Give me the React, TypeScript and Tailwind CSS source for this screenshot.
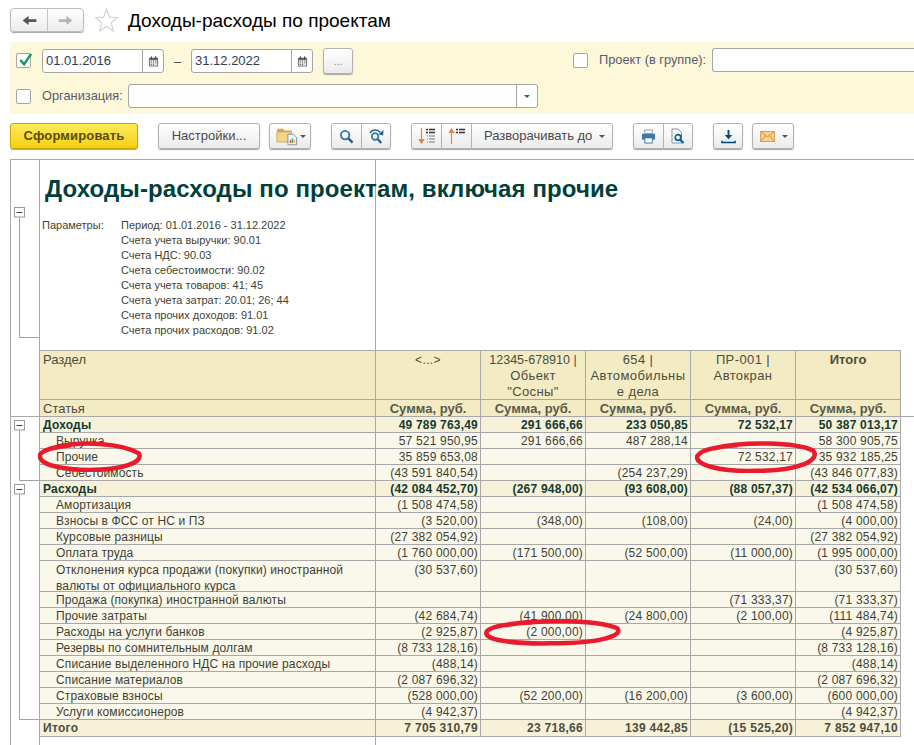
import type { ReactNode } from "react";

const btn =
  "flex items-center justify-center h-[26px] rounded-[3px] border border-[#b2b2b2] bg-linear-to-b from-white to-[#ebebeb] shadow-[0_1px_1px_#a3a3a3] text-[13px] text-[#4a4a4a]";

type Row = { name: string; vals: string[]; kind: "group" | "item" | "total"; tall?: boolean };

const rows: Row[] = [
  { name: "Доходы", kind: "group", vals: ["49 789 763,49", "291 666,66", "233 050,85", "72 532,17", "50 387 013,17"] },
  { name: "Выручка", kind: "item", vals: ["57 521 950,95", "291 666,66", "487 288,14", "", "58 300 905,75"] },
  { name: "Прочие", kind: "item", vals: ["35 859 653,08", "", "", "72 532,17", "35 932 185,25"] },
  { name: "Себестоимость", kind: "item", vals: ["(43 591 840,54)", "", "(254 237,29)", "", "(43 846 077,83)"] },
  { name: "Расходы", kind: "group", vals: ["(42 084 452,70)", "(267 948,00)", "(93 608,00)", "(88 057,37)", "(42 534 066,07)"] },
  { name: "Амортизация", kind: "item", vals: ["(1 508 474,58)", "", "", "", "(1 508 474,58)"] },
  { name: "Взносы в ФСС от НС и ПЗ", kind: "item", vals: ["(3 520,00)", "(348,00)", "(108,00)", "(24,00)", "(4 000,00)"] },
  { name: "Курсовые разницы", kind: "item", vals: ["(27 382 054,92)", "", "", "", "(27 382 054,92)"] },
  { name: "Оплата труда", kind: "item", vals: ["(1 760 000,00)", "(171 500,00)", "(52 500,00)", "(11 000,00)", "(1 995 000,00)"] },
  { name: "Отклонения курса продажи (покупки) иностранной валюты от официального курса", kind: "item", tall: true, vals: ["(30 537,60)", "", "", "", "(30 537,60)"] },
  { name: "Продажа (покупка) иностранной валюты", kind: "item", vals: ["", "", "", "(71 333,37)", "(71 333,37)"] },
  { name: "Прочие затраты", kind: "item", vals: ["(42 684,74)", "(41 900,00)", "(24 800,00)", "(2 100,00)", "(111 484,74)"] },
  { name: "Расходы на услуги банков", kind: "item", vals: ["(2 925,87)", "(2 000,00)", "", "", "(4 925,87)"] },
  { name: "Резервы по сомнительным долгам", kind: "item", vals: ["(8 733 128,16)", "", "", "", "(8 733 128,16)"] },
  { name: "Списание выделенного НДС на прочие расходы", kind: "item", vals: ["(488,14)", "", "", "", "(488,14)"] },
  { name: "Списание материалов", kind: "item", vals: ["(2 087 696,32)", "", "", "", "(2 087 696,32)"] },
  { name: "Страховые взносы", kind: "item", vals: ["(528 000,00)", "(52 200,00)", "(16 200,00)", "(3 600,00)", "(600 000,00)"] },
  { name: "Услуги комиссионеров", kind: "item", vals: ["(4 942,37)", "", "", "", "(4 942,37)"] },
];

const params = [
  "Период: 01.01.2016 - 31.12.2022",
  "Счета учета выручки: 90.01",
  "Счета НДС: 90.03",
  "Счета себестоимости: 90.02",
  "Счета учета товаров: 41; 45",
  "Счета учета затрат: 20.01; 26; 44",
  "Счета прочих доходов: 91.01",
  "Счета прочих расходов: 91.02",
];

const gridCols = "grid grid-cols-[28px_337px_105px_105px_105px_105px_105px_14px]";

function Caret() {
  return <span className="w-0 h-0 border-x-[3px] border-x-transparent border-t-[3px] border-t-[#555]" />;
}

function CheckBox({ checked }: { checked?: boolean }) {
  return (
    <span className="relative block w-[15px] h-[15px] rounded-[2px] border border-[#a5a5a5] bg-white">
      {checked && (
        <svg viewBox="0 0 16 16" className="absolute left-[1px] -top-[2px] w-[15px] h-[15px]">
          <path d="M2.5 8.5 6.5 13 14 2" fill="none" stroke="#0f9d58" strokeWidth="2.6" />
        </svg>
      )}
    </span>
  );
}

function CalendarIcon() {
  return (
    <svg viewBox="0 0 12 12" className="w-[11px] h-[11px]">
      <rect x="1" y="2" width="10" height="9.5" fill="#666" rx="1" />
      <rect x="3" y="0.5" width="1.4" height="2.5" fill="#444" />
      <rect x="7.6" y="0.5" width="1.4" height="2.5" fill="#444" />
      <rect x="2" y="4.5" width="8" height="6" fill="#eee" />
      <path d="M3 5.5h1.2M5.4 5.5h1.2M7.8 5.5H9M3 7.5h1.2M5.4 7.5h1.2M7.8 7.5H9M3 9.3h1.2M5.4 9.3h1.2" stroke="#555" strokeWidth="1" />
    </svg>
  );
}

function DateField({ value }: { value: string }) {
  return (
    <div className="flex h-[24px] w-[122px] rounded-[3px] border border-[#a5a5a5] bg-white">
      <span className="w-[99px] pl-[3px] text-[13px] leading-[22px] text-[#2f3b52]">{value}</span>
      <span className="flex flex-1 items-center justify-center border-l border-[#a5a5a5]">
        <CalendarIcon />
      </span>
    </div>
  );
}

function SortIcon({ up }: { up?: boolean }) {
  return (
    <svg viewBox="0 0 18 18" className="w-[18px] h-[18px]">
      {up ? (
        <path d="M3.5 17V3M1.3 5.5 3.5 2l2.2 3.5z" stroke="#e8834a" strokeWidth="1.2" fill="#e8834a" />
      ) : (
        <path d="M3.5 1v14M1.3 12.5 3.5 16l2.2-3.5z" stroke="#e8834a" strokeWidth="1.2" fill="#e8834a" />
      )}
      <path d="M8 2.5h2M11 2.5h6M8 5.5h2M11 5.5h6" stroke="#333" strokeWidth="1.4" />
      {!up && <path d="M9 9h1M11 9h6M9 12h1M11 12h6M9 15h1M11 15h6" stroke="#777" strokeWidth="1.1" />}
    </svg>
  );
}

function ReportFolderIcon() {
  return (
    <svg viewBox="0 0 24 20" className="w-[22px] h-[19px]">
      <path d="M1 3.5 2 1.5h6l1 2h8v3H1z" fill="#d9a94f" />
      <rect x="1" y="5" width="16" height="11" fill="#f2d48c" stroke="#c99b45" strokeWidth="0.8" />
      <path d="M13 7.5h6l3.5 3.5v8H13z" fill="#f4f6f8" stroke="#7d8d9b" />
      <rect x="15" y="14" width="1.4" height="3" fill="#d9443a" />
      <rect x="17" y="12" width="1.4" height="5" fill="#3ca55c" />
      <rect x="19" y="13.5" width="1.4" height="3.5" fill="#e0a030" />
    </svg>
  );
}

function SearchIcon() {
  return (
    <svg viewBox="0 0 16 16" className="w-[15px] h-[15px]">
      <circle cx="6.5" cy="6.5" r="4.5" fill="none" stroke="#2d78ad" strokeWidth="2" />
      <path d="M10 10l4.5 4.5" stroke="#1f618f" strokeWidth="2.6" />
    </svg>
  );
}

function SearchNextIcon() {
  return (
    <svg viewBox="0 0 18 18" className="w-[17px] h-[17px]">
      <circle cx="7.5" cy="9" r="3.5" fill="none" stroke="#2d78ad" strokeWidth="1.8" />
      <path d="M10.5 12l3.5 4" stroke="#1f618f" strokeWidth="2.4" />
      <path d="M2 5c2.5-3.5 8-4 11 -.5" fill="none" stroke="#1f618f" strokeWidth="1.6" />
      <path d="M11 6.5 16.5 2 16 8z" fill="#1f618f" />
    </svg>
  );
}

function PrintIcon() {
  return (
    <svg viewBox="0 0 16 16" className="w-[15px] h-[15px]">
      <path d="M4 1h8v4H4z" fill="#fff" stroke="#7d9ab3" />
      <rect x="1" y="5" width="14" height="6.5" rx="1" fill="#3f76a6" />
      <path d="M4 9.5h8V15H4z" fill="#fff" stroke="#3f76a6" />
    </svg>
  );
}

function PreviewIcon() {
  return (
    <svg viewBox="0 0 16 16" className="w-[16px] h-[16px]">
      <path d="M2 1h6l3.5 3.5V15H2z" fill="#f7f9fb" stroke="#7d93a8" />
      <circle cx="8" cy="9.5" r="2.8" fill="#fff" stroke="#0f5f8f" strokeWidth="1.7" />
      <path d="M10 11.5l3.5 3.5" stroke="#0f5f8f" strokeWidth="2.2" />
    </svg>
  );
}

function DownloadIcon() {
  return (
    <svg viewBox="0 0 16 16" className="w-[15px] h-[15px]">
      <path d="M8 1v7" stroke="#004a78" strokeWidth="2" />
      <path d="M4 6.5h8L8 11z" fill="#004a78" />
      <path d="M1 12.5v2h14v-2" fill="none" stroke="#004a78" strokeWidth="1.6" />
    </svg>
  );
}

function MailIcon() {
  return (
    <svg viewBox="0 0 16 12" className="w-[15px] h-[11px]">
      <rect x="0.5" y="0.5" width="15" height="11" fill="#f6d38f" stroke="#d39a3f" />
      <path d="M1 1l7 5.5L15 1M1 11l5-6M15 11l-5-6" fill="none" stroke="#c98f35" />
    </svg>
  );
}

function Oval({ className, d }: { className: string; d: string }) {
  return (
    <svg viewBox="0 0 100 30" preserveAspectRatio="none" className={`absolute pointer-events-none ${className}`}>
      <path d={d} fill="none" stroke="#ea1a2c" strokeWidth="4.5" vectorEffect="non-scaling-stroke" />
    </svg>
  );
}

function Header({ children, bold }: { children: ReactNode; bold?: boolean }) {
  return (
    <div className={`border-r border-[#a8a8a8] bg-[#f3ebc4] pt-[1px] text-center text-[13px] text-[#4d4d3f] ${bold ? "font-bold" : "tracking-[0.4px]"}`}>
      {children}
    </div>
  );
}

function TreeLines() {
  const box = (y: number) => (
    <g key={y}>
      <rect x="14.5" y={y} width="10" height="9.5" fill="#fff" stroke="#9a9a9a" />
      <path d={`M16.5 ${y + 5}h6`} stroke="#444" strokeWidth="1" />
    </g>
  );
  return (
    <svg className="absolute left-0 top-0 w-[39px] h-[745px] pointer-events-none" viewBox="0 0 39 745">
      <path d="M19.5 217V337.5H39M19.5 430V480.5H39M19.5 494V719.5H39" fill="none" stroke="#a0a0a0" />
      {box(207.5)}
      {box(420.5)}
      {box(484.5)}
    </svg>
  );
}

export default function App() {
  return (
    <div className="relative flex h-[745px] w-[914px] flex-col overflow-hidden bg-white font-['Liberation_Sans',Arial,sans-serif]">
      {/* заголовок */}
      <div className="flex h-[42px] items-start pl-[10px] pt-[8px]">
        <div className="flex h-[24px] w-[74px] rounded-[4px] border border-[#bdbdbd] bg-linear-to-b from-white to-[#ececec] shadow-[0_1px_1px_#a3a3a3]">
          <span className="flex w-[37px] items-center justify-center border-r border-[#c4c4c4]">
            <svg viewBox="0 0 16 12" className="w-[15px] h-[11px]">
              <path d="M0.5 6 7 1v3.5h8.5v3H7V11z" fill="#555" />
            </svg>
          </span>
          <span className="flex flex-1 items-center justify-center">
            <svg viewBox="0 0 16 12" className="w-[15px] h-[11px]">
              <path d="M15.5 6 9 1v3.5H.5v3H9V11z" fill="#b4b4b4" />
            </svg>
          </span>
        </div>
        <svg viewBox="0 0 24 24" className="ml-[10px] mt-[0px] w-[25px] h-[24px]">
          <path d="M12 1.5l3 7.6 8 .6-6.2 5.2 2 8-6.8-4.4-6.8 4.4 2-8L1 9.7l8-.6z" fill="#fff" stroke="#cfd3d6" strokeWidth="1.2" />
        </svg>
        <h1 className="ml-[9px] text-[19px] leading-[26px] text-black">Доходы-расходы по проектам</h1>
      </div>

      {/* отбор */}
      <div className="ml-[10px] flex h-[72px] flex-col bg-[#fdf8d9]">
        <div className="flex h-[36px] items-start">
          <div className="ml-[6px] mt-[11px]"><CheckBox checked /></div>
          <div className="ml-[11px] mt-[7px]"><DateField value="01.01.2016" /></div>
          <span className="ml-[10px] mt-[10px] w-[17px] text-[13px] text-[#444]">–</span>
          <div className="mt-[7px]"><DateField value="31.12.2022" /></div>
          <button className={`${btn} ml-[10px] mt-[6px] w-[30px] !text-[11px] !text-[#888]`}>...</button>
          <div className="ml-[220px] mt-[11px]"><CheckBox /></div>
          <span className="ml-[11px] mt-[10px] w-[107px] whitespace-nowrap text-[12.8px] leading-[16px] text-[#5a5a70]">Проект (в группе):</span>
          <div className="ml-[6px] mt-[6px] h-[24px] flex-1 rounded-l-[3px] border-y border-l border-[#a5a5a5] bg-white" />
        </div>
        <div className="flex items-start">
          <div className="ml-[6px] mt-[11px]"><CheckBox /></div>
          <span className="ml-[11px] mt-[10px] w-[80px] whitespace-nowrap text-[12.8px] leading-[16px] text-[#5a5a70]">Организация:</span>
          <div className="ml-[6px] mt-[6px] flex h-[24px] w-[410px] rounded-[3px] border border-[#a5a5a5] bg-white">
            <span className="flex-1" />
            <span className="flex w-[21px] items-center justify-center border-l border-[#a5a5a5]"><Caret /></span>
          </div>
        </div>
      </div>

      {/* командная панель */}
      <div className="ml-[10px] mt-[9px] flex h-[27px] items-start">
        <button className="h-[26px] w-[128px] rounded-[3px] border border-[#c9a500] bg-linear-to-b from-[#fdeb55] to-[#f4d000] text-[13px] font-bold tracking-[0.15px] text-[#5c4c0a] shadow-[0_1px_1px_#a3a3a3]">
          Сформировать
        </button>
        <button className={`${btn} ml-[20px] w-[102px]`}>Настройки...</button>
        <button className={`${btn} ml-[9px] w-[42px] !justify-start gap-[2px] pl-[6px]`}><ReportFolderIcon /><Caret /></button>
        <div className={`${btn} ml-[20px] w-[60px]`}>
          <span className="flex h-full w-[30px] items-center justify-center border-r border-[#b2b2b2]"><SearchIcon /></span>
          <span className="flex h-full flex-1 items-center justify-center"><SearchNextIcon /></span>
        </div>
        <div className={`${btn} ml-[20px] w-[202px]`}>
          <span className="flex h-full w-[30px] items-center justify-center border-r border-[#b2b2b2]"><SortIcon /></span>
          <span className="flex h-full w-[30px] items-center justify-center border-r border-[#b2b2b2]"><SortIcon up /></span>
          <span className="flex h-full flex-1 items-center gap-[7px] whitespace-nowrap pl-[12px]">Разворачивать до <Caret /></span>
        </div>
        <div className={`${btn} ml-[20px] w-[60px]`}>
          <span className="flex h-full w-[30px] items-center justify-center border-r border-[#b2b2b2]"><PrintIcon /></span>
          <span className="flex h-full flex-1 items-center justify-center"><PreviewIcon /></span>
        </div>
        <button className={`${btn} ml-[20px] w-[30px]`}><DownloadIcon /></button>
        <button className={`${btn} ml-[9px] w-[42px] !justify-start gap-[7px] pl-[7px]`}><MailIcon /><Caret /></button>
      </div>

      <div className="ml-[10px] mt-[9px] h-px shrink-0 bg-[#a8a8a8]" />

      {/* отчет */}
      <div className="ml-[10px] flex flex-1 flex-col border-l border-[#a8a8a8] text-[12px] leading-[16px] text-[#3f3f33]">
        <div className={`${gridCols} h-[190px]`}>
          <div />
          <div className="relative border-x border-[#a8a8a8] pl-[2px]">
            <div className="mt-[15px] ml-[3px] whitespace-nowrap text-[24px] font-bold leading-[28px] tracking-[0.1px] text-[#003f3a]">
              Доходы-расходы по проектам, включая прочие
            </div>
            <div className="mt-[15px] flex text-[11px] leading-[15px]">
              <span className="w-[79px]">Параметры:</span>
              <div>
                {params.map((p) => (
                  <div key={p}>{p}</div>
                ))}
              </div>
            </div>
          </div>
        </div>

        <div className={`${gridCols} h-[49px]`}>
          <div />
          <div className="col-span-6 grid grid-cols-[337px_105px_105px_105px_105px_105px] border-t border-[#a8a8a8]">
            <div className="border-x border-[#a8a8a8] bg-[#f3ebc4] pl-[3px] pt-[1px] text-[13px] text-[#4d4d3f]">Раздел</div>
            <Header><span className="text-[12px]">&lt;...&gt;</span></Header>
            <Header><span className="text-[12.5px] tracking-normal">12345-678910 |</span><br />Обьект<br />"Сосны"</Header>
            <Header>654 |<br />Автомобильны<br />е дела</Header>
            <Header>ПР-001 |<br />Автокран</Header>
            <Header bold>Итого</Header>
          </div>
        </div>

        <div className={`${gridCols} h-[18px]`}>
          <div className="border-b border-[#a8a8a8]" />
          <div className="border border-[#a8a8a8] bg-[#f3ebc4] pl-[3px] pt-[1px] text-[13px] leading-[15px] text-[#4d4d3f]">Статья</div>
          {[0, 1, 2, 3, 4].map((i) => (
            <div key={i} className="border-y border-r border-[#a8a8a8] bg-[#f3ebc4] pt-[1px] text-center text-[13px] font-bold leading-[15px] text-[#5a5a48]">
              Сумма, руб.
            </div>
          ))}
          <div className="border-b border-[#a8a8a8]" />
        </div>

        {rows.map((r) => (
          <div key={r.name} className={`${gridCols} ${r.tall ? "grid-rows-[31px] leading-[16px]" : "grid-rows-[16px] leading-[15px]"}`}>
            <div />
            <div
              className={`border-x border-b border-[#a8a8a8] pt-[0.5px] ${
                r.kind === "group"
                  ? "bg-[#f7f1d9] pl-[3px] font-bold tracking-[0.2px] text-[#123c33]"
                  : "bg-[#faf8ea] pl-[16px] pr-[20px] tracking-[0.12px]"
              }`}
            >
              {r.name}
            </div>
            {r.vals.map((v, i) => (
              <div
                key={i}
                className={`border-r border-b border-[#a8a8a8] pr-[2px] pt-[0.5px] text-right tracking-[0.2px] ${
                  r.kind === "group" ? "bg-[#f7f1d9] font-bold text-[#123c33]" : "bg-[#faf8ea]"
                }`}
              >
                {v}
              </div>
            ))}
          </div>
        ))}

        <div className={`${gridCols} h-[17px]`}>
          <div />
          <div className="border-x border-b border-[#a8a8a8] bg-[#f7f1d9] pl-[3px] font-bold tracking-[0.3px] text-[#4d4d3f]">Итого</div>
          {["7 705 310,79", "23 718,66", "139 442,85", "(15 525,20)", "7 852 947,10"].map((v) => (
            <div key={v} className="border-r border-b border-[#a8a8a8] bg-[#f7f1d9] pr-[2px] text-right font-bold tracking-[0.3px] text-[#4d4d3f]">
              {v}
            </div>
          ))}
        </div>

        <div className={`${gridCols} flex-1`}>
          <div />
          <div className="border-x border-[#a8a8a8]" />
        </div>
      </div>

      <TreeLines />
      <Oval className="left-[38px] top-[441px] w-[104px] h-[31px]" d="M20 5C45 0 82 3 97 12 102 21 80 28 50 28 20 28 -1 22 2 13 5 8 20 5 32 4" />
      <Oval className="left-[695px] top-[441px] w-[122px] h-[32px]" d="M15 7C40 0 82 1 97 9 103 18 85 28 50 28 20 29 -1 22 2 14 5 8 20 5 35 4" />
      <Oval className="left-[484px] top-[619px] w-[137px] h-[27px]" d="M15 7C40 0 82 1 97 10 103 18 85 27 50 27 20 28 -1 23 2 14 5 8 20 5 35 4" />
    </div>
  );
}
